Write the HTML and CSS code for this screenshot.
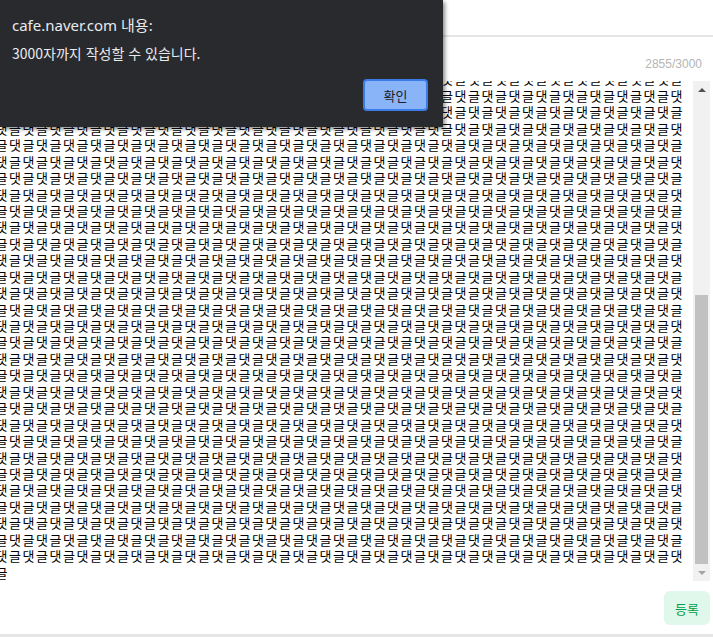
FILE: index.html
```html
<!doctype html>
<html lang="ko">
<head>
    <meta charset="UTF-8">
    <title>댓글 작성</title>
    <link rel="stylesheet" href="styles.css">
</head>
<body>
<div class="page">
    <div class="topbar"></div>
    <div class="counter">2855/3000</div>
    <div class="editor">
        <div class="comment-box">
            <div class="comment-text"></div>
        </div>
        <div class="scrollbar">
            <div class="sb-btn"><span class="arrow-up"></span></div>
            <div class="sb-space"></div>
            <div class="sb-thumb"></div>
            <div class="sb-btn"><span class="arrow-down"></span></div>
        </div>
    </div>
    <div class="actions">
        <button class="btn-submit">등록</button>
    </div>
    <div class="bottom-line"></div>
</div>

<div class="alert">
    <div class="alert-title">cafe.naver.com 내용:</div>
    <div class="alert-msg">3000자까지 작성할 수 있습니다.</div>
    <div class="alert-buttons">
        <button class="alert-ok">확인</button>
    </div>
</div>

<script>
    // textarea content: 57 chars per wrapped line, scrolled to the bottom
    var box=document.querySelector(".comment-text");
    var perLine=57, total=2971;
    var s="";
    for(var i=0;i<total;i++){
        s+=(i%2==0)?"글":"댓";
    }
    for(var p=0;p<s.length;p+=perLine){
        var line=document.createElement("div");
        line.className="line";
        line.textContent=s.slice(p,p+perLine);
        box.appendChild(line);
    }
</script>
</body>
</html>
```

FILE: styles.css
```css
html,body{
    width:100%;
    height:100%;
    margin:0px;
    padding:0px;
    overflow:hidden;
    background:#fff;
}
body{
    font-family:"Noto Sans CJK KR","Noto Sans",sans-serif;
}
.page{
    height:637px;
    display:flex;
    flex-direction:column;
}
.topbar{
    height:35px;
    flex:none;
    border-bottom:2px solid #e5e5e5;
}
.counter{
    flex:none;
    padding:20px 11px 10px 0;
    text-align:right;
    font-family:"Liberation Sans",Arial,sans-serif;
    font-size:12px;
    line-height:14px;
    color:#b5b5b5;
}
.editor{
    height:500px;
    flex:none;
    display:flex;
    margin-right:3px;
}
/* rtl so the wide text block sticks to the right and overflows to the left */
.comment-box{
    flex:1;
    min-width:0;
    overflow:hidden;
    display:flex;
    flex-direction:column;
    justify-content:flex-end;
    direction:rtl;
    padding-right:9px;
}
.comment-text{
    flex:none;
    width:max-content;
    direction:ltr;
    font-size:13px;
    letter-spacing:1.54px;
    line-height:16.44px;
    color:#000;
}
.comment-text .line{
    white-space:nowrap;
}
.scrollbar{
    width:17px;
    flex:none;
    display:flex;
    flex-direction:column;
    background:#f1f1f1;
}
.sb-btn{
    height:17px;
    flex:none;
    display:flex;
    align-items:center;
    justify-content:center;
}
.arrow-up{
    width:0;
    height:0;
    border-left:4px solid transparent;
    border-right:4px solid transparent;
    border-bottom:4px solid #505050;
}
.arrow-down{
    width:0;
    height:0;
    border-left:4px solid transparent;
    border-right:4px solid transparent;
    border-top:4px solid #a3a3a3;
}
.sb-space{
    flex:1;
}
.sb-thumb{
    height:269px;
    flex:none;
    margin:0 2px;
    background:#c1c1c1;
}
.actions{
    flex:none;
    display:flex;
    justify-content:flex-end;
    padding:10px 3px 9px 0;
}
.btn-submit{
    width:46px;
    height:34px;
    border:0;
    border-radius:6px;
    background:#e0f8eb;
    color:#009f47;
    font-family:"Noto Sans CJK KR",sans-serif;
    font-size:13px;
    padding:0;
}
.bottom-line{
    height:3px;
    flex:none;
    background:#e5e5e5;
}

/* alert dialog */
.alert{
    position:absolute;
    top:0px;
    left:0px;
    width:443px;
    height:127px;
    box-sizing:border-box;
    padding:15px 15px 0 12px;
    background:#292a2d;
    color:#e8eaed;
    box-shadow:2px 2px 4px rgba(0,0,0,0.45);
}
.alert-title{
    font-family:"Noto Sans","Noto Sans CJK KR",sans-serif;
    font-size:15px;
    line-height:20px;
}
.alert-msg{
    margin-top:9px;
    font-size:14px;
    line-height:18px;
}
.alert-buttons{
    margin-top:17px;
    display:flex;
    justify-content:flex-end;
}
.alert-ok{
    width:65px;
    height:32px;
    box-sizing:border-box;
    border:2px solid #3b7be9;
    border-radius:4px;
    background:#8ab4f8;
    color:#202124;
    font-family:"Noto Sans CJK KR",sans-serif;
    font-size:13px;
    padding:0;
}
```
